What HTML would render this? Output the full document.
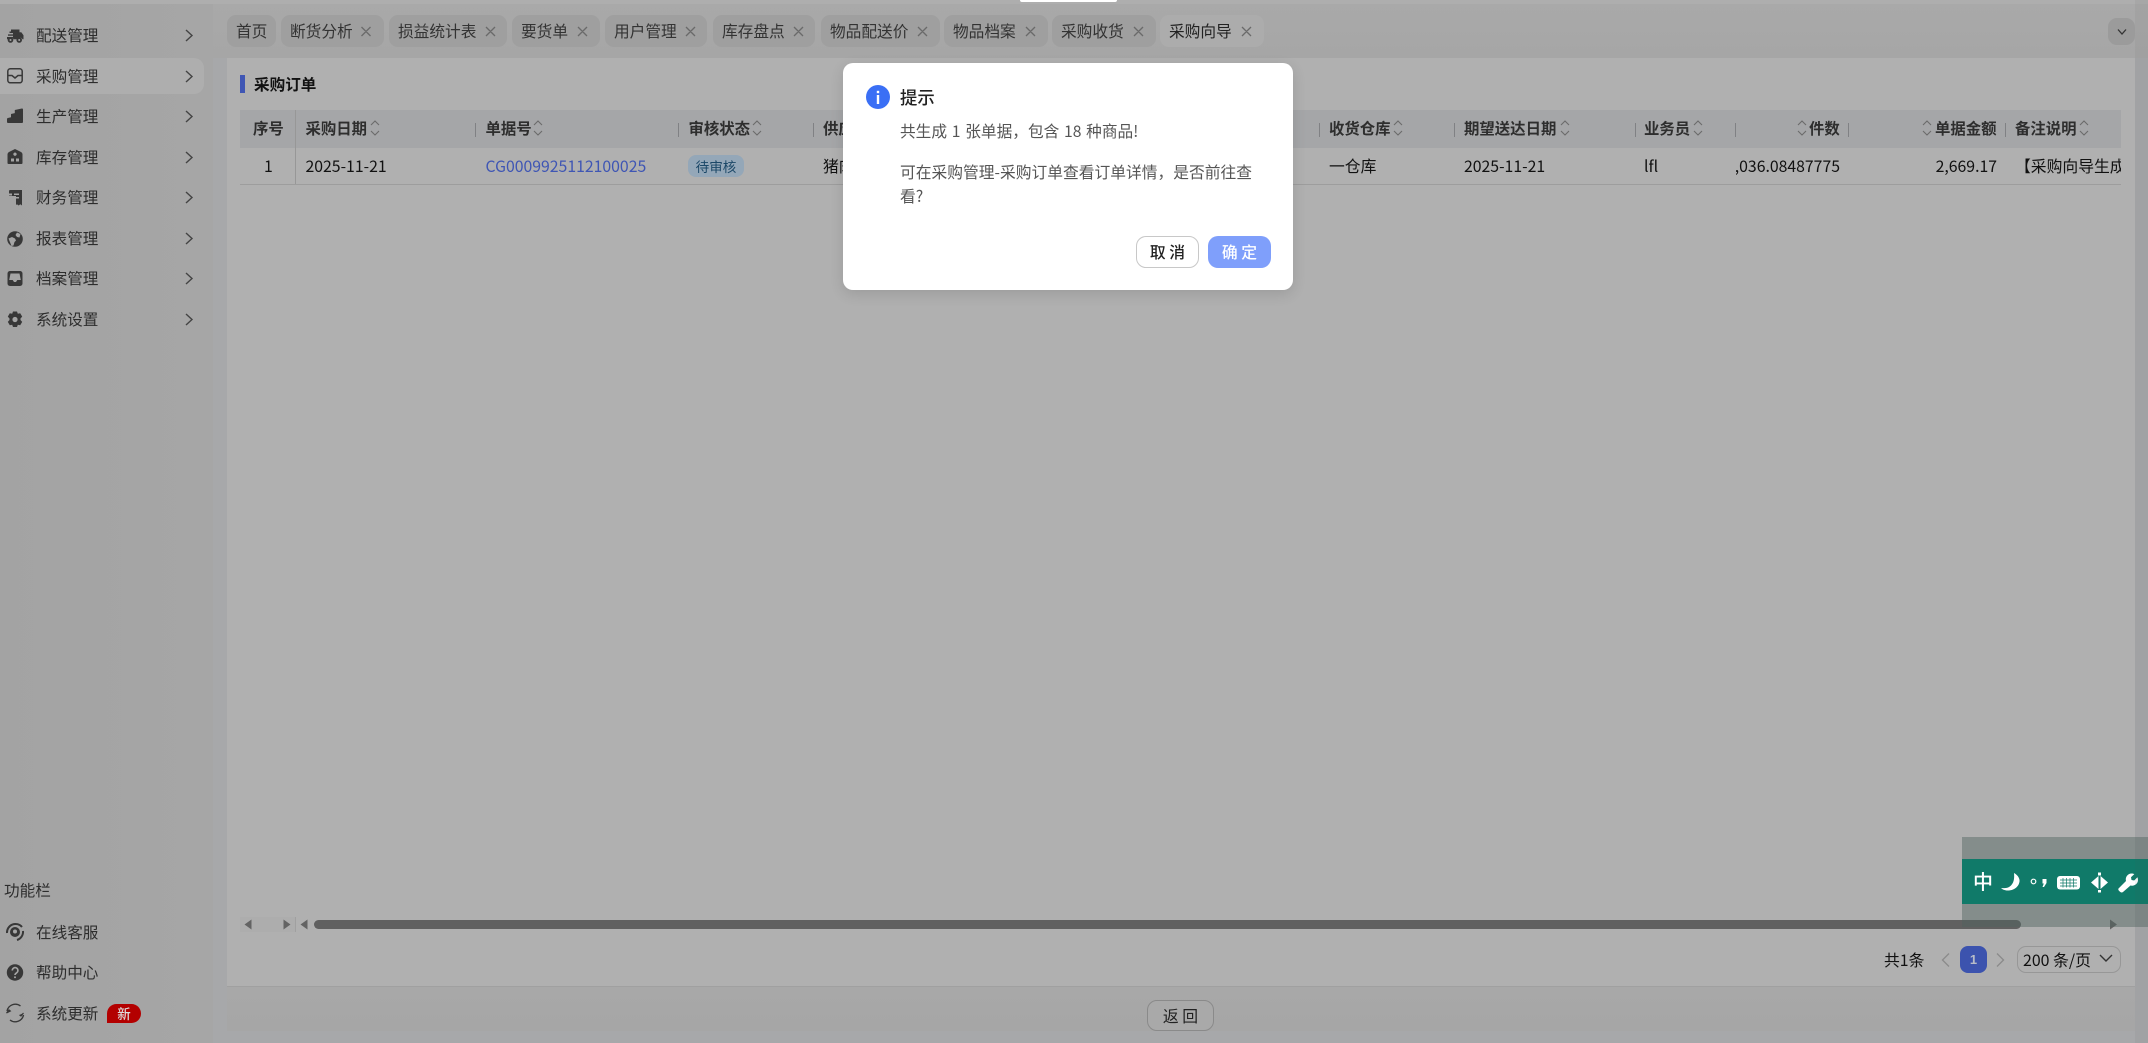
<!DOCTYPE html>
<html lang="zh-CN"><head><meta charset="utf-8"><title>采购向导</title>
<style>
html,body{margin:0;padding:0;width:2148px;height:1043px;overflow:hidden;background:#a7a8aa}
body{position:relative;font-family:"Noto Sans CJK SC","Liberation Sans",sans-serif;font-size:15.5px;color:#2a2a2a}
.a{position:absolute;white-space:nowrap}
svg{position:absolute;overflow:visible}
.m{left:36px;width:70px;height:24px;line-height:24px;color:#2d2d2d;font-size:15.6px}
.tab{top:15px;height:32px;line-height:31px;background:#9f9f9f;border-radius:9px;color:#333;font-size:15.7px}
.tab span{position:absolute;left:9px;top:0;white-space:nowrap}
.th{top:110px;height:38px;line-height:37px;font-weight:700;color:#2e2e2e;font-size:15.4px}
.td{top:154px;height:24px;line-height:24px;color:#111;font-size:15.8px}
.dv{top:123px;width:1px;height:14px;background:#808184}
</style></head><body>
<!-- top strip -->
<div class="a" style="left:0;top:0;width:2148px;height:4px;background:#aeaeae"></div>
<!-- sidebar -->
<div class="a" style="left:0;top:4px;width:213px;height:1039px;background:linear-gradient(90deg,#a3a3a3,#a6a6a6)"></div>
<div class="a" style="left:0;top:58px;width:204px;height:36px;background:#aeaeae;border-radius:0 10px 10px 0"></div>

<div class="a m" style="top:23px">配送管理</div>
<div class="a m" style="top:64px">采购管理</div>
<div class="a m" style="top:104px">生产管理</div>
<div class="a m" style="top:145px">库存管理</div>
<div class="a m" style="top:185px">财务管理</div>
<div class="a m" style="top:226px">报表管理</div>
<div class="a m" style="top:266px">档案管理</div>
<div class="a m" style="top:307px">系统设置</div>

<!-- chevrons -->
<svg style="left:0;top:0" width="213" height="340" fill="none" stroke="#444" stroke-width="1.4">
<path d="M186 30l6 5.5-6 5.5M186 71l6 5.5-6 5.5M186 111l6 5.5-6 5.5M186 152l6 5.5-6 5.5M186 192l6 5.5-6 5.5M186 233l6 5.5-6 5.5M186 273l6 5.5-6 5.5M186 314l6 5.5-6 5.5"/>
</svg>
<!-- menu icons -->
<svg style="left:0;top:0" width="40" height="340">
<g fill="#383838">
<!-- truck -->
<path d="M11 29.500h8.500v2.800h1.800l2.200 3v4h-1a3 3 0 0 0-5.500 0h-3.500a3 3 0 0 0-5.500 0H7v-2.300h6v-1.200H8v-1.400h5V33H9.500v-1.500H11z"/>
<circle cx="10.500" cy="40" r="2.800"/><circle cx="19.200" cy="40" r="2.800"/>
<!-- stairs -->
<path d="M7 119a1 1 0 0 1 .8-1l3.200-.8V114l3.800-.9V110l7-1.500a1 1 0 0 1 1.200 1V122a1 1 0 0 1-1 1H8a1 1 0 0 1-1-1z"/>
<!-- house -->
<path d="M15 149l6 3c1 .6 1.500 1.500 1.500 2.500V163a1 1 0 0 1-1 1h-13a1 1 0 0 1-1-1v-8.500c0-1 .5-1.900 1.500-2.500z"/>
<!-- receipt -->
<path d="M10 190h12v15.500l-1.700-1.300-1.700 1.300-1.600-1.300-1 .8V196H9v-5a1 1 0 0 1 1-1z"/>
<!-- globe -->
<circle cx="15" cy="239" r="7.800"/>
<!-- solid inbox -->
<path d="M10 271h10a2.500 2.500 0 0 1 2.500 2.500v10a2.500 2.500 0 0 1-2.500 2.500H10a2.500 2.500 0 0 1-2.500-2.500v-10A2.500 2.500 0 0 1 10 271z"/>
<!-- gear -->
<path d="M13 311.500h4l.8 2.300 2.400-.6 2 3.400-1.700 1.900v1.500l1.700 1.900-2 3.400-2.400-.6-.8 2.300h-4l-.8-2.300-2.400.6-2-3.400 1.700-1.900v-1.500l-1.700-1.900 2-3.400 2.400.6z"/>
</g>
<circle cx="10.500" cy="40" r="1" fill="#a5a5a5"/><circle cx="19.200" cy="40" r="1" fill="#a5a5a5"/>
<circle cx="15" cy="319.500" r="2.600" fill="#a5a5a5"/>
<path d="M15 152.500a1.700 1.700 0 1 1-.01 0zM11 158.500h3v3h-3zM16 158.500h3v3h-3z" fill="#a5a5a5"/>
<path d="M9 193.500h3v2H9zM14 193.500h5v1.500h-5zM14 197h5v1.500h-5z" fill="#a5a5a5"/>
<path d="M8.500 238.500l3.500-1.500 3 1.500 1 2-1.500 1.500-1 3.500-2 .5zM17 232.500l3.500 1.500-1 3.500-2.500-.5-1.500-2z" fill="#a5a5a5"/>
<path d="M10.500 273.500h9l1.300 6.500h-3.500l-1.300 2h-2l-1.300-2H9.200z" fill="#a5a5a5"/>
<path d="M10.300 68.800h9.400a2.500 2.500 0 0 1 2.500 2.500v9a2.500 2.500 0 0 1-2.500 2.500h-9.400a2.500 2.500 0 0 1-2.500-2.500v-9a2.500 2.500 0 0 1 2.500-2.500zM8 75.500h4l3 2.500 3-2.500h4" fill="none" stroke="#383838" stroke-width="1.500"/>
</svg>
<!-- bottom sidebar -->
<div class="a" style="left:4px;top:878px;height:24px;line-height:24px;color:#2d2d2d;font-size:15.6px">功能栏</div>
<div class="a m" style="top:920px">在线客服</div>
<div class="a m" style="top:960px">帮助中心</div>
<div class="a m" style="top:1001px">系统更新</div>
<div class="a" style="left:107px;top:1004px;width:34px;height:19px;background:#b30000;border-radius:10px 10px 10px 0;color:#ddd;font-size:13.5px;line-height:19px;text-align:center;font-weight:500">新</div>
<svg style="left:0;top:900px" width="40" height="143" fill="none" stroke="#383838">
<circle cx="15" cy="32" r="5" fill="#383838" stroke="none"/><circle cx="15" cy="31.500" r="2" fill="#a5a5a5" stroke="none"/>
<path d="M7 33a8.500 8.500 0 0 1 15-6M23 31a8.500 8.500 0 0 1-6 9" stroke-width="2"/>
<circle cx="15" cy="72.500" r="8.200" fill="#383838" stroke="none"/>
<path d="M12.300 70.500a2.800 2.800 0 1 1 4.300 2.300c-1 .7-1.600 1.200-1.600 2.200" stroke="#a5a5a5" stroke-width="1.600"/><circle cx="15" cy="77.200" r="1" fill="#a5a5a5" stroke="none"/>
<path d="M7 111a8.500 8.500 0 0 1 13.500-5M23.500 115a8.500 8.500 0 0 1-13.500 5" stroke-width="1.400"/>
<path d="M6.500 113l2.500-3 1.300 1zM23.500 113l-2.500 3-1.500-1" fill="#383838" stroke-width="1.200"/>
</svg>
<!-- tab bar -->
<div class="a" style="left:213px;top:4px;width:1935px;height:54px;background:linear-gradient(180deg,#a9a9a9,#a6a6a6)"></div>
<div class="a tab" style="left:227px;width:49px"><span>首页</span></div>
<div class="a tab" style="left:281px;width:103px"><span>断货分析</span></div>
<div class="a tab" style="left:389px;width:118px"><span>损益统计表</span></div>
<div class="a tab" style="left:512px;width:88px"><span>要货单</span></div>
<div class="a tab" style="left:605px;width:102px"><span>用户管理</span></div>
<div class="a tab" style="left:713px;width:102px"><span>库存盘点</span></div>
<div class="a tab" style="left:821px;width:119px"><span>物品配送价</span></div>
<div class="a tab" style="left:944px;width:104px"><span>物品档案</span></div>
<div class="a tab" style="left:1052px;width:104px"><span>采购收货</span></div>
<div class="a tab" style="left:1160px;width:104px;background:#acacac;color:#222"><span>采购向导</span></div>
<svg style="left:0;top:0" width="1300" height="50" fill="none" stroke="#6a6a6a" stroke-width="1.300">
<path d="M361.500 27l9 9m0-9l-9 9M486 27l9 9m0-9l-9 9M578 27l9 9m0-9l-9 9M686 27l9 9m0-9l-9 9M794 27l9 9m0-9l-9 9M918 27l9 9m0-9l-9 9M1026 27l9 9m0-9l-9 9M1134 27l9 9m0-9l-9 9M1242 27l9 9m0-9l-9 9"/>
</svg>
<div class="a" style="left:2108px;top:18px;width:27px;height:27px;background:#9b9b9b;border-radius:9px"></div>
<svg style="left:2117px;top:28px" width="10" height="8" fill="none" stroke="#333" stroke-width="1.300"><path d="M1 1.500l4 4.500 4-4.500"/></svg>

<!-- content panel -->
<div class="a" style="left:227px;top:58px;width:1908px;height:928px;background:#b0b0b0"></div>
<div class="a" style="left:227px;top:986px;width:1908px;height:1px;background:#a0a0a0"></div>
<div class="a" style="left:227px;top:987px;width:1908px;height:44px;background:linear-gradient(180deg,#a8a8a8,#a6a6a6)"></div>

<div class="a" style="left:240px;top:75px;width:5px;height:18px;background:#3f56b4"></div>
<div class="a" style="left:254px;top:72px;height:24px;line-height:24px;font-weight:700;color:#111;font-size:15.6px">采购订单</div>

<!-- table -->
<div class="a" style="left:240px;top:110px;width:1881px;height:38px;background:#a5a6a8"></div>
<div class="a" style="left:240px;top:184px;width:1881px;height:1px;background:#9d9d9d"></div>
<div class="a" style="left:295px;top:110px;width:1px;height:74px;background:#979797"></div>
<div class="a th" style="left:253px">序号</div>
<div class="a th" style="left:305.500px">采购日期</div>
<div class="a th" style="left:485.500px">单据号</div>
<div class="a th" style="left:688.500px">审核状态</div>
<div class="a th" style="left:823px">供应商</div>
<div class="a th" style="left:1329px">收货仓库</div>
<div class="a th" style="left:1464px">期望送达日期</div>
<div class="a th" style="left:1644px">业务员</div>
<div class="a th" style="left:1809px">件数</div>
<div class="a th" style="left:1935px">单据金额</div>
<div class="a th" style="left:2015px">备注说明</div>
<div class="a dv" style="left:475px"></div><div class="a dv" style="left:678px"></div><div class="a dv" style="left:813px"></div>
<div class="a dv" style="left:1319px"></div><div class="a dv" style="left:1454px"></div><div class="a dv" style="left:1635px"></div>
<div class="a dv" style="left:1735px"></div><div class="a dv" style="left:1848px"></div><div class="a dv" style="left:2005px"></div>
<svg style="left:0;top:0" width="2148" height="150" fill="none" stroke="#6b6b6b" stroke-width="1.100">
<path d="M371 125l4-4 4 4M371 131l4 4 4-4M534 125l4-4 4 4M534 131l4 4 4-4M753 125l4-4 4 4M753 131l4 4 4-4M1394 125l4-4 4 4M1394 131l4 4 4-4M1561 125l4-4 4 4M1561 131l4 4 4-4M1694 125l4-4 4 4M1694 131l4 4 4-4M1798 125l4-4 4 4M1798 131l4 4 4-4M1923 125l4-4 4 4M1923 131l4 4 4-4M2080 125l4-4 4 4M2080 131l4 4 4-4"/>
</svg>
<div class="a td" style="left:264px">1</div>
<div class="a td" style="left:305.500px">2025-11-21</div>
<div class="a td" style="left:485.500px;color:#3f56b4">CG0009925112100025</div>
<div class="a" style="left:688px;top:155px;width:56px;height:22px;line-height:22px;background:#94a7b8;border-radius:8px;text-align:center;color:#1c4868;font-size:13.6px">待审核</div>
<div class="a td" style="left:823px">猪肉供应商</div>
<div class="a td" style="left:1329px">一仓库</div>
<div class="a td" style="left:1464px">2025-11-21</div>
<div class="a td" style="left:1644px">lfl</div>
<div class="a td" style="left:1736px;width:104px;overflow:hidden;text-align:right;direction:rtl"><bdi>,036.08487775</bdi></div>
<div class="a td" style="left:1900px;width:97px;text-align:right">2,669.17</div>
<div class="a td" style="left:2015px;width:106px;overflow:hidden">【采购向导生成】</div>

<!-- scrollbars -->
<div class="a" style="left:240px;top:917px;width:55px;height:15px;background:#adadad"></div>
<div class="a" style="left:295px;top:917px;width:1px;height:15px;background:#a0a0a0"></div>
<svg style="left:0;top:900px" width="2148" height="40" fill="#636363">
<path d="M244.500 24.500l7-5v10zM290.500 24.500l-7-5v10zM300.500 24.500l7-5v10zM2117 24.500l-7-5v10z"/>
</svg>
<div class="a" style="left:314px;top:920px;width:1707px;height:9px;background:#606060;border-radius:5px"></div>

<!-- pagination -->
<div class="a" style="left:1884px;top:948px;height:24px;line-height:24px;color:#111;font-size:15.8px">共1条</div>
<svg style="left:1940px;top:950px" width="70" height="20" fill="none" stroke="#8b8b8b" stroke-width="1.400"><path d="M9 3.500L2.500 10 9 16.500M57 3.500l6.500 6.500-6.500 6.500"/></svg>
<div class="a" style="left:1960px;top:946px;width:27px;height:27px;background:#3c53ae;border-radius:8px;color:#b8bcc8;text-align:center;line-height:27px;font-size:13px;font-weight:700;font-family:'Liberation Sans',sans-serif">1</div>
<div class="a" style="left:2017px;top:946px;width:102px;height:25px;border:1px solid #979797;border-radius:9px"></div>
<div class="a" style="left:2023px;top:948px;height:24px;line-height:24px;color:#111;font-size:15.9px">200 条/页</div>
<svg style="left:2099px;top:953px" width="14" height="10" fill="none" stroke="#333" stroke-width="1.400"><path d="M1 2l6 6 6-6"/></svg>

<!-- back button -->
<div class="a" style="left:1147px;top:1000px;width:65px;height:29px;border:1px solid #8a8a8a;border-radius:10px;background:#a9a9a9;text-align:center;line-height:29px;color:#222;font-size:15.8px">返 回</div>

<!-- IME toolbar -->
<div class="a" style="left:1962px;top:837px;width:186px;height:90px;background:rgba(80,100,95,.45)"></div>
<div class="a" style="left:1962px;top:859px;width:186px;height:45px;background:#107a69"></div>
<div class="a" style="left:1973px;top:868px;height:26px;line-height:26px;color:#fff;font-size:20px;font-weight:500">中</div>
<svg style="left:2000px;top:872px" width="22" height="20" fill="#fff"><path d="M14 1c3 1.500 6 5 5.500 8.500C19 14 15 18 9 18.500 6 18.700 3 18 1 16c4 .5 7.500 0 10-2.500 3-3 3.500-7.500 3-12.500z"/></svg>
<svg style="left:2030px;top:875px" width="20" height="16"><circle cx="3.500" cy="6.500" r="2.300" fill="none" stroke="#fff" stroke-width="1.200"/><path d="M12.500 4h4v4l-2.500 4h-1.500l1.300-3.500h-1.300z" fill="#fff"/></svg>
<svg style="left:2057px;top:876px" width="24" height="14"><rect x="0" y="0" width="23" height="13.500" rx="3" fill="#fff"/><path d="M3 4h17M3 7h17M3 10h17M6 2v9.500M9.500 2v9.500M13 2v9.500M16.500 2v9.500" stroke="#107a69" stroke-width=".7"/></svg>
<svg style="left:2091px;top:871px" width="17" height="22" fill="#fff"><path d="M7.500 5L0 11.500l7.500 6.500zM9.500 5L17 11.500 9.500 18zM7 1.500h3v3H7zM7 19h3v2.500H7z"/></svg>
<svg style="left:2118px;top:873px" width="20" height="19" fill="#fff"><path d="M.5 15.500l7.500-7.500C7 4.500 9.500.5 13.500.5c1 0 2 .2 2.800.6l-3.300 3.200.5 2.700 2.700.5 3.200-3.200c.4.800.6 1.700.6 2.700 0 4-4 6.500-7.500 5.500L5 19c-1 .8-2.200.6-3-.2l-1-1c-.7-.7-.9-1.500-.5-2.300z"/></svg>
<div class="a" style="left:2135px;top:0;width:13px;height:1043px;background:rgba(80,82,86,.07)"></div>

<!-- top message remnant -->
<div class="a" style="left:1020px;top:0;width:97px;height:2px;background:#fff;border-radius:0 0 8px 8px"></div>

<!-- modal -->
<div class="a" style="left:843px;top:63px;width:450px;height:227px;background:#fff;border-radius:10px;box-shadow:0 4px 14px rgba(0,0,0,.12)"></div>
<svg style="left:866px;top:85px" width="24" height="24"><circle cx="12" cy="12" r="12" fill="#3a6ff5"/><rect x="10.800" y="10" width="2.400" height="9" fill="#fff"/><rect x="10.800" y="5.800" width="2.400" height="2.400" fill="#fff"/></svg>
<div class="a" style="left:900px;top:85px;height:26px;line-height:26px;font-size:17.4px;color:#222;font-weight:500">提示</div>
<div class="a" style="left:900px;top:119px;height:24px;line-height:24px;font-size:15.7px;color:#555;word-spacing:1.200px">共生成 1 张单据，包含 18 种商品!</div>
<div class="a" style="left:900px;top:160px;width:366px;white-space:normal;line-height:24px;font-size:15.75px;color:#555">可在采购管理-采购订单查看订单详情，是否前往查看?</div>
<div class="a" style="left:1136px;top:236px;width:61px;height:30px;border:1px solid #c8c8c8;border-radius:10px;background:#fff;text-align:center;line-height:30px;color:#222;font-size:15.8px;font-weight:500">取 消</div>
<div class="a" style="left:1208px;top:236px;width:63px;height:32px;border-radius:10px;background:#7f9ffb;text-align:center;line-height:32px;color:#fff;font-size:15.8px;font-weight:500">确 定</div>
</body></html>
